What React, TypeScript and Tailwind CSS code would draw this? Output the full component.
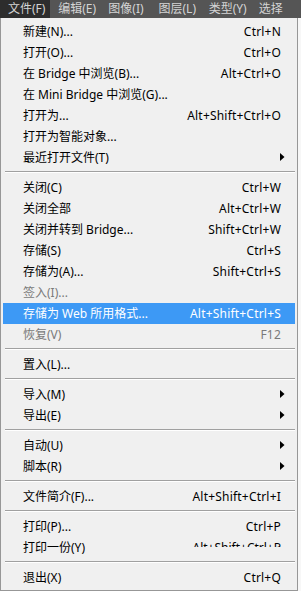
import { Fragment } from "react";

type Item =
  | { type: "sep" }
  | {
      type?: "item";
      label: string;
      shortcut?: string;
      sub?: boolean;
      disabled?: boolean;
      active?: boolean;
      clipped?: boolean;
    };

const MENU_BAR = ["文件(F)", "编辑(E)", "图像(I)", "图层(L)", "类型(Y)", "选择"];

const ITEMS: Item[] = [
  { label: "新建(N)...", shortcut: "Ctrl+N" },
  { label: "打开(O)...", shortcut: "Ctrl+O" },
  { label: "在 Bridge 中浏览(B)...", shortcut: "Alt+Ctrl+O" },
  { label: "在 Mini Bridge 中浏览(G)..." },
  { label: "打开为...", shortcut: "Alt+Shift+Ctrl+O" },
  { label: "打开为智能对象..." },
  { label: "最近打开文件(T)", sub: true },
  { type: "sep" },
  { label: "关闭(C)", shortcut: "Ctrl+W" },
  { label: "关闭全部", shortcut: "Alt+Ctrl+W" },
  { label: "关闭并转到 Bridge...", shortcut: "Shift+Ctrl+W" },
  { label: "存储(S)", shortcut: "Ctrl+S" },
  { label: "存储为(A)...", shortcut: "Shift+Ctrl+S" },
  { label: "签入(I)...", disabled: true },
  { label: "存储为 Web 所用格式...", shortcut: "Alt+Shift+Ctrl+S", active: true },
  { label: "恢复(V)", shortcut: "F12", disabled: true },
  { type: "sep" },
  { label: "置入(L)..." },
  { type: "sep" },
  { label: "导入(M)", sub: true },
  { label: "导出(E)", sub: true },
  { type: "sep" },
  { label: "自动(U)", sub: true },
  { label: "脚本(R)", sub: true },
  { type: "sep" },
  { label: "文件简介(F)...", shortcut: "Alt+Shift+Ctrl+I" },
  { type: "sep" },
  { label: "打印(P)...", shortcut: "Ctrl+P" },
  { label: "打印一份(Y)", shortcut: "Alt+Shift+Ctrl+P", clipped: true },
  { type: "sep" },
  { label: "退出(X)", shortcut: "Ctrl+Q" },
];

const Arrow = () => (
  <svg width="5" height="8" viewBox="0 0 5 8" className="absolute right-[10px] top-[6px]">
    <path d="M0 0 L4.5 4 L0 8 Z" fill="#000" />
  </svg>
);

export default function App() {
  return (
    <div
      className="w-[301px] h-[591px] bg-[#f7f7f7] overflow-hidden text-[12px]"
      style={{ fontFamily: '"Noto Sans", "Noto Sans CJK SC", sans-serif' }}
    >
      <div className="flex h-[18px] bg-[#555555] text-[#d4d4d4] whitespace-nowrap">
        {MENU_BAR.map((name, i) => (
          <div
            key={name}
            className={
              i === 0
                ? "flex items-center w-[55px] pl-[8px] bg-[#2d2d2d]"
                : "flex items-center w-[55px] pl-[8px]"
            }
          >
            {name}
          </div>
        ))}
      </div>

      <div className="w-[298px] h-[573px] bg-[#f0f0f0] border-l border-r border-b border-[#979797] pt-[3px] px-[2px] whitespace-nowrap">
        {ITEMS.map((item, i) => {
          if (item.type === "sep") {
            return (
              <div key={i} className="h-[9px] pt-[3px] pl-[2px]">
                <div className="h-px bg-[#a0a0a0]" />
                <div className="h-px bg-white" />
              </div>
            );
          }
          const color = item.active
            ? "bg-[#3d99f5] text-white"
            : item.disabled
              ? "text-[#7a7a7a]"
              : "text-[#000]";
          return (
            <Fragment key={i}>
              <div className={`relative flex items-center h-[21px] pl-[20px] pr-[14px] ${color}`}>
                <span className="flex-1">{item.label}</span>
                {item.shortcut &&
                  (item.clipped ? (
                    <span className="h-[6px] overflow-hidden self-start mt-[4px] leading-[14px]">{item.shortcut}</span>
                  ) : (
                    <span className="tracking-[0.2px]">{item.shortcut}</span>
                  ))}
                {item.sub && <Arrow />}
              </div>
            </Fragment>
          );
        })}
      </div>
    </div>
  );
}
